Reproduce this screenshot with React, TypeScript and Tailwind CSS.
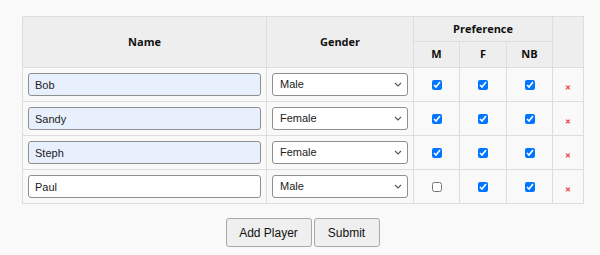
import { useState } from "react";

type Player = {
  name: string;
  gender: string;
  prefs: { m: boolean; f: boolean; nb: boolean };
  filled: boolean;
};

const initialPlayers: Player[] = [
  { name: "Bob", gender: "Male", prefs: { m: true, f: true, nb: true }, filled: true },
  { name: "Sandy", gender: "Female", prefs: { m: true, f: true, nb: true }, filled: true },
  { name: "Steph", gender: "Female", prefs: { m: true, f: true, nb: true }, filled: true },
  { name: "Paul", gender: "Male", prefs: { m: false, f: true, nb: true }, filled: false },
];

const Chevron = () => (
  <svg
    width="8"
    height="5"
    viewBox="0 0 8 5"
    className="pointer-events-none absolute right-[6px] top-[9px]"
    fill="none"
    stroke="#555"
    strokeWidth="1.1">
    <path d="M1 1l3 3l3-3" />
  </svg>
);

const App = () => {
  const [players, setPlayers] = useState(initialPlayers);

  const updatePlayer = (index: number, patch: Partial<Player>) => {
    setPlayers((prev) => prev.map((p, i) => (i === index ? { ...p, ...patch } : p)));
  };

  const togglePref = (index: number, key: "m" | "f" | "nb") => {
    setPlayers((prev) =>
      prev.map((p, i) =>
        i === index ? { ...p, prefs: { ...p.prefs, [key]: !p.prefs[key] } } : p
      )
    );
  };

  const removePlayer = (index: number) => {
    setPlayers((prev) => prev.filter((_, i) => i !== index));
  };

  const addPlayer = () => {
    setPlayers((prev) => [
      ...prev,
      { name: "", gender: "Male", prefs: { m: false, f: false, nb: false }, filled: false },
    ]);
  };

  const th =
    "border border-[#dddddd] bg-[#eeeeee] text-[11px] font-bold text-[#111] font-['Open_Sans',sans-serif] text-center align-middle";
  const td = "border border-[#dddddd] p-[5px] text-center align-middle leading-none";

  return (
    <div className="min-h-[255px] w-[600px] bg-[#f9f9f9] pt-[16px] font-['Liberation_Sans',Arial,sans-serif]">
      <div className="pl-[22px]">
        <table className="w-[561px] table-fixed border-collapse">
          <colgroup>
            <col className="w-[244px]" />
            <col className="w-[147px]" />
            <col className="w-[46px]" />
            <col className="w-[47px]" />
            <col className="w-[46px]" />
            <col className="w-[31px]" />
          </colgroup>
          <thead>
            <tr className="h-[25px]">
              <th rowSpan={2} className={th}>
                Name
              </th>
              <th rowSpan={2} className={th}>
                Gender
              </th>
              <th colSpan={3} className={th}>
                Preference
              </th>
              <th rowSpan={2} className={th}></th>
            </tr>
            <tr className="h-[26px]">
              <th className={th}>M</th>
              <th className={th}>F</th>
              <th className={th}>NB</th>
            </tr>
          </thead>
          <tbody>
            {players.map((player, i) => (
              <tr key={i} className="h-[34px]">
                <td className={td}>
                  <input
                    type="text"
                    value={player.name}
                    onChange={(e) => updatePlayer(i, { name: e.target.value })}
                    className={`block h-[23px] w-full rounded-[3px] border border-[#8f8f8f] px-[6px] text-[11px] text-[#222] focus:outline-none ${
                      player.filled ? "bg-[#e8f0fe]" : "bg-white"
                    }`}
                  />
                </td>
                <td className={td}>
                  <div className="relative">
                    <select
                      value={player.gender}
                      onChange={(e) => updatePlayer(i, { gender: e.target.value })}
                      className="block h-[23px] w-full appearance-none rounded-[3px] border border-[#8f8f8f] bg-white px-[7px] text-[11px] text-[#222] focus:outline-none">
                      <option>Male</option>
                      <option>Female</option>
                      <option>Non-binary</option>
                    </select>
                    <Chevron />
                  </div>
                </td>
                {(["m", "f", "nb"] as const).map((key) => (
                  <td key={key} className={td}>
                    <input
                      type="checkbox"
                      checked={player.prefs[key]}
                      onChange={() => togglePref(i, key)}
                      className="m-0 h-[10px] w-[10px] align-middle"
                    />
                  </td>
                ))}
                <td className={td}>
                  <button
                    onClick={() => removePlayer(i)}
                    className="text-[7px] font-bold leading-none text-[#e53935]">
                    ✕
                  </button>
                </td>
              </tr>
            ))}
          </tbody>
        </table>
      </div>
      <div className="mt-[14px] flex justify-center gap-[2px] pl-[5px]">
        <button
          onClick={addPlayer}
          className="h-[29px] w-[86px] rounded-[3px] border border-[#a8a8a8] bg-[#efefef] text-[12px] text-[#111]">
          Add Player
        </button>
        <button className="h-[29px] w-[66px] rounded-[3px] border border-[#a8a8a8] bg-[#efefef] text-[12px] text-[#111]">
          Submit
        </button>
      </div>
    </div>
  );
};

export default App;
